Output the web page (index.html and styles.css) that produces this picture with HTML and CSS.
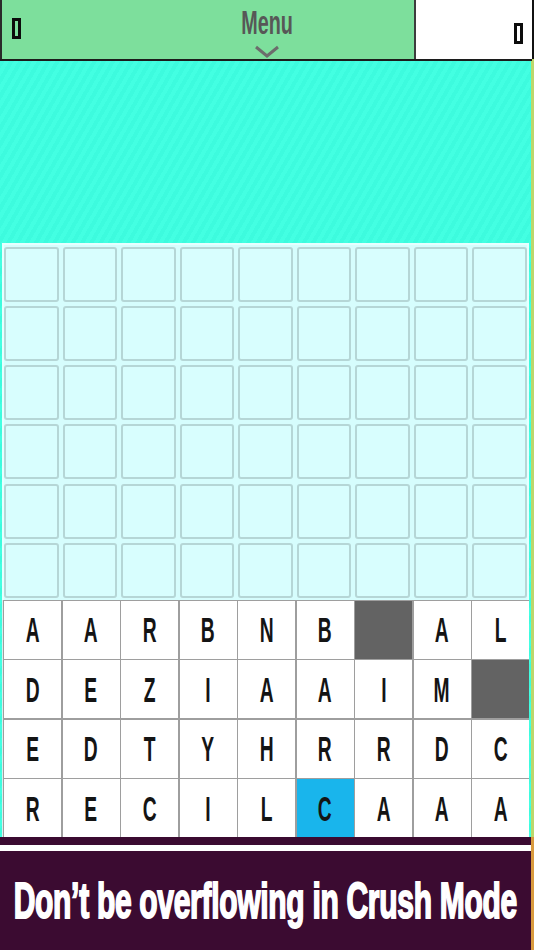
FILE: index.html
```html
<!DOCTYPE html>
<html lang="en">
<head>
<meta charset="utf-8">
<title>Crush Mode</title>
<link rel="stylesheet" href="styles.css">
</head>
<body>
<div class="app">
  <header class="topbar">
    <div class="panel panel-green"><span class="slot"></span></div>
    <div class="panel panel-white"><span class="slot"></span></div>
    <div class="menu">
      <span class="menu-label">Menu</span>
      <svg class="chevron" width="26" height="13" viewBox="0 0 26 13"><polyline points="2,2 13,11 24,2" fill="none" stroke="#6c6c6c" stroke-width="3"/></svg>
    </div>
  </header>

  <main class="play">
    <div class="sky"></div>
    <section class="board">
      <div class="empty-grid">
        <div class="slotcell"></div><div class="slotcell"></div><div class="slotcell"></div><div class="slotcell"></div><div class="slotcell"></div><div class="slotcell"></div><div class="slotcell"></div><div class="slotcell"></div><div class="slotcell"></div>
        <div class="slotcell"></div><div class="slotcell"></div><div class="slotcell"></div><div class="slotcell"></div><div class="slotcell"></div><div class="slotcell"></div><div class="slotcell"></div><div class="slotcell"></div><div class="slotcell"></div>
        <div class="slotcell"></div><div class="slotcell"></div><div class="slotcell"></div><div class="slotcell"></div><div class="slotcell"></div><div class="slotcell"></div><div class="slotcell"></div><div class="slotcell"></div><div class="slotcell"></div>
        <div class="slotcell"></div><div class="slotcell"></div><div class="slotcell"></div><div class="slotcell"></div><div class="slotcell"></div><div class="slotcell"></div><div class="slotcell"></div><div class="slotcell"></div><div class="slotcell"></div>
        <div class="slotcell"></div><div class="slotcell"></div><div class="slotcell"></div><div class="slotcell"></div><div class="slotcell"></div><div class="slotcell"></div><div class="slotcell"></div><div class="slotcell"></div><div class="slotcell"></div>
        <div class="slotcell"></div><div class="slotcell"></div><div class="slotcell"></div><div class="slotcell"></div><div class="slotcell"></div><div class="slotcell"></div><div class="slotcell"></div><div class="slotcell"></div><div class="slotcell"></div>
      </div>
      <div class="letter-grid">
        <div class="tile"><span>A</span></div><div class="tile"><span>A</span></div><div class="tile"><span>R</span></div><div class="tile"><span>B</span></div><div class="tile"><span>N</span></div><div class="tile"><span>B</span></div><div class="tile tile-dark"></div><div class="tile"><span>A</span></div><div class="tile"><span>L</span></div>
        <div class="tile"><span>D</span></div><div class="tile"><span>E</span></div><div class="tile"><span>Z</span></div><div class="tile"><span>I</span></div><div class="tile"><span>A</span></div><div class="tile"><span>A</span></div><div class="tile"><span>I</span></div><div class="tile"><span>M</span></div><div class="tile tile-dark"></div>
        <div class="tile"><span>E</span></div><div class="tile"><span>D</span></div><div class="tile"><span>T</span></div><div class="tile"><span>Y</span></div><div class="tile"><span>H</span></div><div class="tile"><span>R</span></div><div class="tile"><span>R</span></div><div class="tile"><span>D</span></div><div class="tile"><span>C</span></div>
        <div class="tile"><span>R</span></div><div class="tile"><span>E</span></div><div class="tile"><span>C</span></div><div class="tile"><span>I</span></div><div class="tile"><span>L</span></div><div class="tile tile-blue"><span>C</span></div><div class="tile"><span>A</span></div><div class="tile"><span>A</span></div><div class="tile"><span>A</span></div>
      </div>
    </section>
  </main>

  <footer class="banner">
    <div class="banner-strip"></div>
    <div class="banner-line"></div>
    <div class="banner-body"><p class="banner-text">Don’t be overflowing in Crush Mode</p></div>
  </footer>
</div>
</body>
</html>
```

FILE: styles.css
```css
html, body {
  margin: 0;
  padding: 0;
}

body {
  width: 534px;
  height: 950px;
  overflow: hidden;
  background: #c4d86c;
  font-family: "Liberation Sans", Arial, sans-serif;
}

.app {
  width: 534px;
  display: flex;
  flex-direction: column;
}

/* ---------- top bar ---------- */
.topbar {
  width: 532px;
  height: 59px;
  display: grid;
  grid-template-columns: 416px 1fr;
  grid-template-rows: 1fr;
  border-bottom: 2px solid #1c1c1c;
  background: #7ddf9c;
}

.panel {
  grid-row: 1;
  display: flex;
  align-items: flex-start;
  box-sizing: border-box;
}

.panel-green {
  grid-column: 1;
  background: #7ddf9c;
  border-left: 2px solid #2a2a2a;
  border-right: 2px solid #3d3d3d;
  padding: 18px 0 0 10px;
}

.panel-white {
  grid-column: 2;
  background: #ffffff;
  border-right: 2px solid #111111;
  justify-content: flex-end;
  padding: 23px 9px 0 0;
}

.slot {
  display: block;
  flex-shrink: 0;
  width: 3px;
  height: 15px;
  border: 3px solid #0c0c0c;
}

.menu {
  grid-row: 1;
  grid-column: 1 / -1;
  display: flex;
  flex-direction: column;
  align-items: center;
  padding: 6px 0 0 0;
  width: 534px;
}

.menu-label {
  display: block;
  font-weight: bold;
  font-size: 33px;
  line-height: 33px;
  color: #575757;
  transform: scaleX(0.6);
  white-space: nowrap;
}

.chevron {
  display: block;
  margin-top: 6px;
}

/* ---------- play area ---------- */
.play {
  width: 531px;
  border-right: 3px solid #bcd76c;
  background-color: #3ffde0;
  background-image: repeating-linear-gradient(120deg, #3dfbde 0 4px, #43ffe2 4px 8px);
  display: flex;
  flex-direction: column;
}

.sky {
  height: 182px;
}

.board {
  display: flex;
  flex-direction: column;
  padding: 0 2px 0 2px;
}

.empty-grid {
  width: 527px;
  box-sizing: border-box;
  height: 357px;
  background: #d6fdfd;
  border: 2px solid #e6ffff;
  border-bottom: 0;
  padding: 1.5px 0 2px 0;
  display: grid;
  grid-template-columns: repeat(9, 1fr);
  grid-template-rows: repeat(6, 1fr);
  column-gap: 4px;
  row-gap: 4.3px;
}

.slotcell {
  border: 2px solid #b5d6d6;
  border-radius: 3px;
  background: #d8fefe;
}

.letter-grid {
  width: 527px;
  box-sizing: border-box;
  height: 237px;
  background: #9e9e9e;
  border-left: 1px solid #dcecec;
  padding: 1px 0 0 1px;
  display: grid;
  grid-template-columns: repeat(9, 1fr);
  grid-template-rows: repeat(4, 1fr);
  gap: 1.5px;
}

.tile {
  background: #ffffff;
  display: flex;
  align-items: center;
  justify-content: center;
}

.tile span {
  display: block;
  font-weight: bold;
  font-size: 35px;
  line-height: 35px;
  color: #141414;
  transform: scaleX(0.55);
}

.tile-dark {
  background: #636363;
}

.tile-blue {
  background: #19b5ec;
}

/* ---------- banner ---------- */
.banner {
  width: 531px;
  border-right: 3px solid #d99a3e;
  display: flex;
  flex-direction: column;
  background: #3b0b31;
}

.banner-strip {
  height: 8px;
  background: #3b0b31;
}

.banner-line {
  height: 6px;
  background: #ffffff;
}

.banner-body {
  height: 99px;
  display: flex;
  align-items: center;
  justify-content: center;
}

.banner-text {
  margin: 0;
  flex-shrink: 0;
  white-space: nowrap;
  font-weight: bold;
  font-size: 50px;
  line-height: 50px;
  color: #ffffff;
  -webkit-text-stroke: 2px #ffffff;
  letter-spacing: -0.5px;
  transform: scaleX(0.6);
}
```
